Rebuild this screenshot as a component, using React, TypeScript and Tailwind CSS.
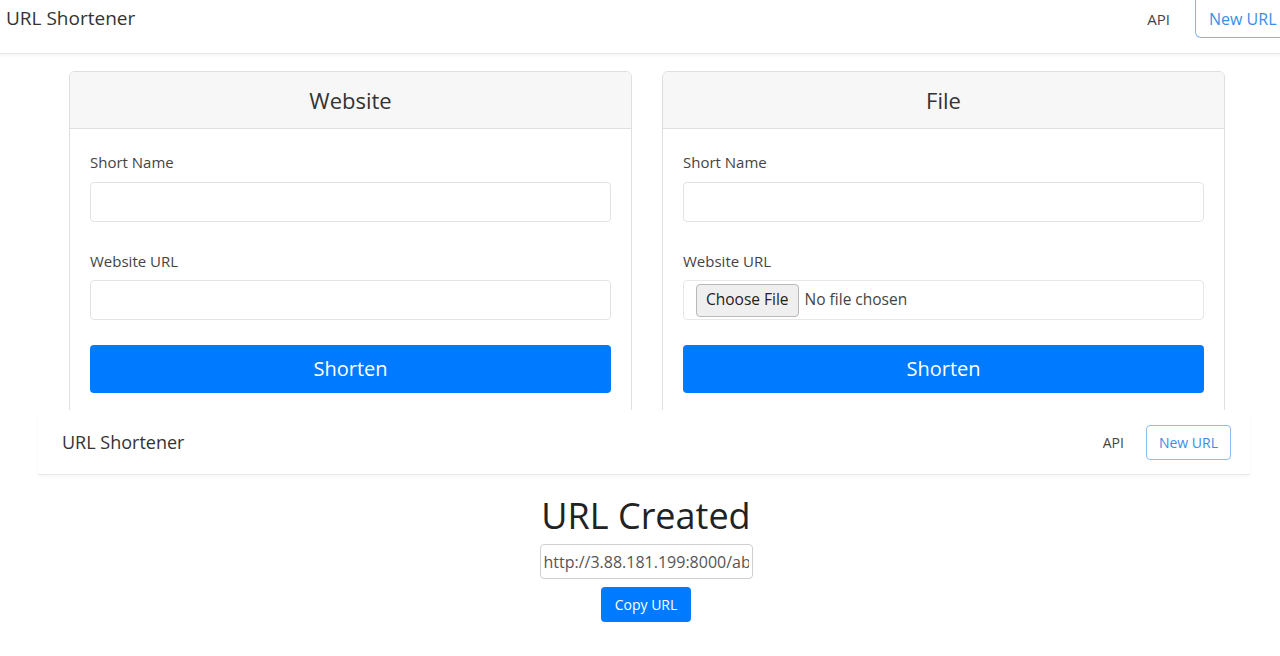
const font = { fontFamily: '"Open Sans", "Noto Sans", sans-serif' };

const FormCard = ({ title, file }: { title: string; file?: boolean }) => {
  return (
    <div className="w-[563px] h-[360px] border border-[#dfdfdf] rounded-md bg-white overflow-hidden">
      <div className="h-[57px] bg-[#f7f7f7] border-b border-[#dfdfdf] flex items-center justify-center">
        <h2 className="text-[22px] text-[#333]">{title}</h2>
      </div>
      <div className="px-[20px] pt-[22px]">
        <label className="block text-[15px] text-[#444] mb-[8px]">Short Name</label>
        <div className="h-[40px] border border-[#e3e3e3] rounded"></div>
        <label className="block text-[15px] text-[#444] mt-[28px] mb-[8px]">Website URL</label>
        {file ? (
          <div className="h-[40px] border border-[#e8e8e8] rounded flex items-center pl-[12px] gap-[6px]">
            <span className="h-[33px] px-[9px] flex items-center bg-[#efefef] border border-[#b8b8b8] rounded-sm text-[15.5px] text-[#222]">
              Choose File
            </span>
            <span className="text-[15.5px] text-[#444]">No file chosen</span>
          </div>
        ) : (
          <div className="h-[40px] border border-[#e3e3e3] rounded"></div>
        )}
        <button className="mt-[25px] w-full h-[48px] bg-[#007bff] text-white text-[20px] rounded">
          Shorten
        </button>
      </div>
    </div>
  );
};

const App = () => {
  return (
    <div className="w-[1280px] h-[656px] overflow-hidden bg-white" style={font}>
      {/* first screenshot */}
      <div className="h-[410px] overflow-hidden">
        <nav className="h-[54px] flex items-start justify-between border-b border-[#e6e6e6] shadow-[0_2px_3px_rgba(0,0,0,0.04)]">
          <span className="ml-[6px] mt-[4px] text-[19px] text-[#333]">URL Shortener</span>
          <div className="flex items-start -mr-[20px]">
            <span className="mt-[8px] mr-[25px] text-[15px] text-[#444]">API</span>
            <span className="h-[38px] w-[105px] pl-[13px] pt-[7px] border border-t-0 border-[#7fb6f0] rounded-bl-md text-[16px] text-[#3a8ee6] whitespace-nowrap">
              New URL
            </span>
          </div>
        </nav>
        <div className="flex gap-[30px] pl-[69px] pt-[17px]">
          <FormCard title="Website" />
          <FormCard title="File" file />
        </div>
      </div>

      {/* second screenshot */}
      <div className="pl-[38px] pr-[30px]">
        <nav className="h-[65px] flex items-center justify-between border-b border-[#e9e9e9] shadow-[0_2px_3px_rgba(0,0,0,0.03)] pl-[24px] pr-[19px]">
          <span className="text-[18px] text-[#333]">URL Shortener</span>
          <div className="flex items-center gap-[22px]">
            <span className="text-[14px] text-[#444]">API</span>
            <span className="h-[35px] px-[12px] flex items-center border border-[#8cbdf2] rounded text-[14px] text-[#3a8ee6]">
              New URL
            </span>
          </div>
        </nav>
      </div>
      <div className="flex flex-col items-center pt-[18px] pl-[12px]">
        <h1 className="text-[36px] leading-[46px] font-medium text-[#222]">URL Created</h1>
        <input
          readOnly
          value="http://3.88.181.199:8000/abc"
          className="mt-[5px] w-[213px] h-[35px] border border-[#cfcfcf] rounded-sm px-[3px] text-[16px] text-[#555] outline-none"
        />
        <button className="mt-[8px] w-[90px] h-[35px] bg-[#007bff] text-white text-[14px] rounded">
          Copy URL
        </button>
      </div>
    </div>
  );
};

export default App;
